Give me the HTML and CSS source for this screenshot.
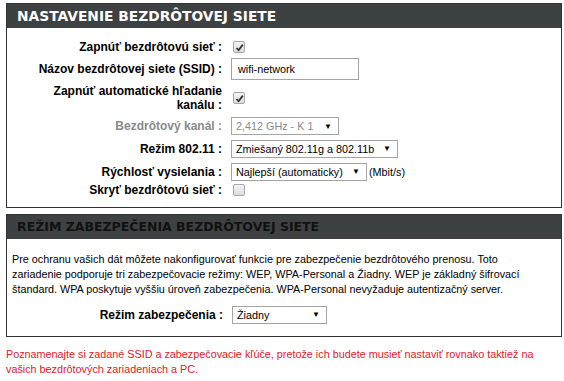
FILE: index.html
```html
<!DOCTYPE html>
<html lang="sk">
<head>
  <meta charset="UTF-8" />
  <title>Nastavenie bezdrôtovej siete</title>
  <link rel="stylesheet" href="styles.css">
</head>
<body>
  <div class="box">
    <h2 class="box-title">NASTAVENIE BEZDRÔTOVEJ SIETE</h2>
    <div class="form">
      <div class="row r1">
        <label>Zapnúť bezdrôtovú sieť :</label>
        <span class="check on"><svg viewBox="0 0 9 9" width="9" height="9"><path d="M1.5 5 L3.6 7.2 L7.8 1.6" fill="none" stroke="#333" stroke-width="1.8"/></svg></span>
      </div>
      <div class="row r2">
        <label>Názov bezdrôtovej siete (SSID) :</label>
        <span class="text-input">wifi-network</span>
      </div>
      <div class="row r3">
        <label>Zapnúť automatické hľadanie<br>kanálu :</label>
        <span class="check on"><svg viewBox="0 0 9 9" width="9" height="9"><path d="M1.5 5 L3.6 7.2 L7.8 1.6" fill="none" stroke="#333" stroke-width="1.8"/></svg></span>
      </div>
      <div class="row r4">
        <label class="disabled">Bezdrôtový kanál :</label>
        <span class="select disabled w-channel"><span>2,412 GHz - K 1</span><span class="arrow">▼</span></span>
      </div>
      <div class="row r5">
        <label>Režim 802.11 :</label>
        <span class="select w-mode"><span>Zmiešaný 802.11g a 802.11b</span><span class="arrow">▼</span></span>
      </div>
      <div class="row r6">
        <label>Rýchlosť vysielania :</label>
        <span class="select w-rate"><span>Najlepší (automaticky)</span><span class="arrow">▼</span></span>
        <span class="unit">(Mbit/s)</span>
      </div>
      <div class="row r7">
        <label>Skryť bezdrôtovú sieť :</label>
        <span class="check"></span>
      </div>
    </div>
  </div>

  <div class="box box-security">
    <h2 class="box-title dark">REŽIM ZABEZPEČENIA BEZDRÔTOVEJ SIETE</h2>
    <p class="info">Pre ochranu vašich dát môžete nakonfigurovať funkcie pre zabezpečenie bezdrôtového prenosu. Toto zariadenie podporuje tri zabezpečovacie režimy: WEP, WPA-Personal a Žiadny. WEP je základný šifrovací štandard. WPA poskytuje vyššiu úroveň zabezpečenia. WPA-Personal nevyžaduje autentizačný server.</p>
    <div class="row sec-row">
      <label>Režim zabezpečenia :</label>
      <span class="select w-sec"><span>Žiadny</span><span class="arrow">▼</span></span>
    </div>
  </div>

  <p class="note">Poznamenajte si zadané SSID a zabezpečovacie kľúče, pretože ich budete musieť nastaviť rovnako taktiež na vašich bezdrôtových zariadeniach a PC.</p>

  <div class="buttons">
    <button class="btn-save">Uložiť</button>
    <button class="btn-cancel">Zrušiť</button>
  </div>
</body>
</html>
```

FILE: styles.css
```css
body {
  margin: 0;
  padding: 3px 3px 0 6px;
  font-family: 'Liberation Sans', sans-serif;
  font-size: 10.8px;
  color: #000;
  background: #fff;
}
.box {
  border: 1px solid #333;
  width: 554px;
}
.box-title {
  margin: 0;
  height: 24px;
  line-height: 24px;
  padding-left: 10px;
  background: #3e4142;
  color: #fff;
  font-family: 'DejaVu Sans', sans-serif;
  font-size: 13.8px;
  font-weight: bold;
  white-space: nowrap;
}
.box-title.dark {
  color: #111;
  font-size: 12.5px;
}
.form {
  padding: 9px 0 10px;
}
.row {
  display: flex;
  align-items: center;
  white-space: nowrap;
}
.row label {
  width: 215px;
  text-align: right;
  font-weight: bold;
  font-size: 12px;
  line-height: 14px;
  margin-right: 9px;
}
.row label.disabled {
  color: #8a8a8a;
}
.r1 { height: 20px; }
.r2 { height: 24px; }
.r3 { height: 34px; }
.r4 { height: 22px; }
.r5 { height: 23px; }
.r6 { height: 23px; }
.r7 { height: 14px; }
.check {
  width: 10px;
  height: 10px;
  border: 1px solid #a8a8a8;
  border-radius: 2px;
  background: linear-gradient(#f4f4f4, #dcdcdc);
  display: flex;
  align-items: center;
  justify-content: center;
  margin-left: 2px;
}
.text-input {
  width: 120px;
  height: 20px;
  line-height: 20px;
  border: 1px solid #a5a5a5;
  padding-left: 6px;
}
.select {
  display: flex;
  justify-content: space-between;
  align-items: center;
  height: 18px;
  border: 1px solid #a5a5a5;
  padding: 0 6px 0 4px;
  background: #fff;
  box-sizing: border-box;
}
.select .arrow {
  font-size: 8px;
}
.select.disabled {
  color: #8a8a8a;
}
.select.disabled .arrow {
  color: #000;
}
.w-channel { width: 108px; }
.w-mode { width: 167px; }
.w-rate { width: 136px; }
.w-sec { width: 95px; }
.unit {
  margin-left: 2px;
}
.box-security {
  margin-top: 6px;
}
.info {
  margin: 13px 30px 0 5px;
  line-height: 15px;
}
.sec-row {
  height: 23px;
  margin: 6px 0 10px;
}
.sec-row label {
  width: 216px;
}
.note {
  color: #e0202a;
  line-height: 15px;
  margin: 10px 0 0;
  width: 556px;
}
.buttons {
  padding: 9px 0 0 199px;
  display: flex;
  gap: 11px;
}
.buttons button {
  font-family: 'Liberation Sans', sans-serif;
  font-size: 11px;
  background: #fff;
  border: 1px solid #888;
  height: 22px;
}
.btn-save { width: 97px; }
.btn-cancel { width: 40px; }
```
